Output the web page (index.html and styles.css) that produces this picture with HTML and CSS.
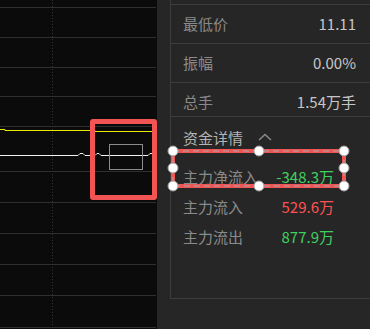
FILE: index.html
```html
<!DOCTYPE html>
<html lang="zh-CN">
<head>
<meta charset="utf-8">
<link rel="stylesheet" href="styles.css">
</head>
<body>
<div class="page">
  <div class="chart">
    <svg class="chart-svg" width="157" height="329" viewBox="0 0 157 329">
      <g stroke="#2f2f2f" stroke-width="1">
        <line x1="0" y1="7.5" x2="156" y2="7.5"/>
        <line x1="0" y1="37.5" x2="156" y2="37.5"/>
        <line x1="0" y1="67.5" x2="156" y2="67.5"/>
        <line x1="0" y1="96.5" x2="156" y2="96.5"/>
        <line x1="0" y1="126.5" x2="156" y2="126.5"/>
        <line x1="0" y1="171.5" x2="156" y2="171.5"/>
        <line x1="0" y1="202.5" x2="156" y2="202.5"/>
        <line x1="0" y1="233.5" x2="156" y2="233.5"/>
        <line x1="0" y1="264.5" x2="156" y2="264.5"/>
        <line x1="0" y1="295.5" x2="156" y2="295.5"/>
        <line x1="0" y1="327.5" x2="156" y2="327.5"/>
      </g>
      <line x1="52.5" y1="0" x2="52.5" y2="329" stroke="#333" stroke-width="1" stroke-dasharray="1 2"/>
      <path d="M0 129.5 H5 V130.5 H95 V131.5 H153" fill="none" stroke="#eaea00" stroke-width="1"/>
      <path d="M0 155.5 H78 L80 153.5 H83 L85 155.5 H95 L97 153.5 H99 L101 155.5 H148 L150 153.5 H153" fill="none" stroke="#f2f2f2" stroke-width="1"/>
      <rect x="109.5" y="144.5" width="33" height="25" fill="none" stroke="#8c8c8c" stroke-width="1"/>
    </svg>
    <div class="mark"></div>
  </div>
  <div class="panel">
    <div class="box">
      <div class="row"><span class="lbl">最低价</span><span class="val">11.11</span></div>
      <div class="row"><span class="lbl">振幅</span><span class="val">0.00%</span></div>
      <div class="row short"><span class="lbl">总手</span><span class="val">1.54万手</span></div>
      <div class="section">
        <div class="sec-head">
          <span class="sec-title">资金详情</span>
          <svg class="chev" width="14" height="8" viewBox="0 0 14 8"><polyline points="1,7 7,1.5 13,7" fill="none" stroke="#8a8a8a" stroke-width="1.5"/></svg>
        </div>
        <div class="flows">
          <div class="frow"><span class="lbl">主力净流入</span><span class="num green">-348.3万</span></div>
          <div class="frow"><span class="lbl">主力流入</span><span class="num red">529.6万</span></div>
          <div class="frow"><span class="lbl">主力流出</span><span class="num green">877.9万</span></div>
        </div>
      </div>
    </div>
    <svg class="select" width="186" height="50" viewBox="0 0 186 50">
      <rect x="7" y="7" width="171" height="35" fill="none" stroke="#f05454" stroke-width="4"/>
      <rect x="7" y="7" width="171" height="35" fill="none" stroke="#a8a8a8" stroke-width="1" stroke-dasharray="6 4"/>
      <g fill="#ffffff" stroke="#9a9a9a" stroke-width="1">
        <circle cx="7" cy="7" r="5"/>
        <circle cx="93" cy="7" r="5"/>
        <circle cx="178" cy="7" r="5"/>
        <circle cx="7" cy="24" r="5"/>
        <circle cx="178" cy="24" r="5"/>
        <circle cx="7" cy="42" r="5"/>
        <circle cx="93" cy="42" r="5"/>
        <circle cx="178" cy="42" r="5"/>
      </g>
    </svg>
  </div>
</div>
</body>
</html>
```

FILE: styles.css
```css
html, body {
  margin: 0;
  padding: 0;
  background: #262626;
}
body {
  font-family: "Noto Sans CJK SC", "Noto Sans", sans-serif;
  width: 370px;
  height: 329px;
  overflow: hidden;
}
.page {
  display: flex;
  width: 370px;
  height: 329px;
}
.chart {
  position: relative;
  width: 157px;
  height: 329px;
  background: #0b0b0b;
  flex: none;
}
.chart-svg {
  display: block;
}
.mark {
  position: absolute;
  left: 90px;
  top: 119px;
  width: 57px;
  height: 71px;
  border: 5px solid #f25454;
  border-radius: 3px;
}
.panel {
  position: relative;
  flex: 1;
  padding-left: 13px;
  background: #262626;
}
.box {
  height: 299px;
  border-left: 1px solid #3d3d3d;
  border-bottom: 1px solid #3d3d3d;
  box-sizing: border-box;
  padding-top: 4px;
}
.row {
  display: flex;
  justify-content: space-between;
  align-items: flex-start;
  height: 38px;
  border-top: 1px solid #3d3d3d;
  padding: 9px 14px 0 12px;
  box-sizing: content-box;
  font-size: 15px;
  line-height: 20px;
  height: 29px;
}
.row.short {
  height: 24px;
}
.lbl {
  color: #8a8a8a;
  font-size: 15px;
}
.val {
  color: #c6c6c6;
  font-size: 15px;
}
.section {
  border-top: 1px solid #3d3d3d;
  padding: 11px 0 0 12px;
}
.sec-head {
  display: flex;
  align-items: center;
  height: 20px;
  line-height: 20px;
  font-size: 15px;
}
.sec-title {
  color: #b4b4b4;
}
.chev {
  margin-left: 15px;
  margin-top: -3px;
}
.flows {
  margin-top: 14px;
  padding-right: 36px;
}
.frow {
  display: flex;
  justify-content: space-between;
  height: 30px;
  line-height: 30px;
  font-size: 15px;
}
.num {
  font-size: 15px;
}
.green {
  color: #3fd160;
}
.red {
  color: #ff5252;
}
.select {
  position: absolute;
  left: 9px;
  top: 144px;
}
```
